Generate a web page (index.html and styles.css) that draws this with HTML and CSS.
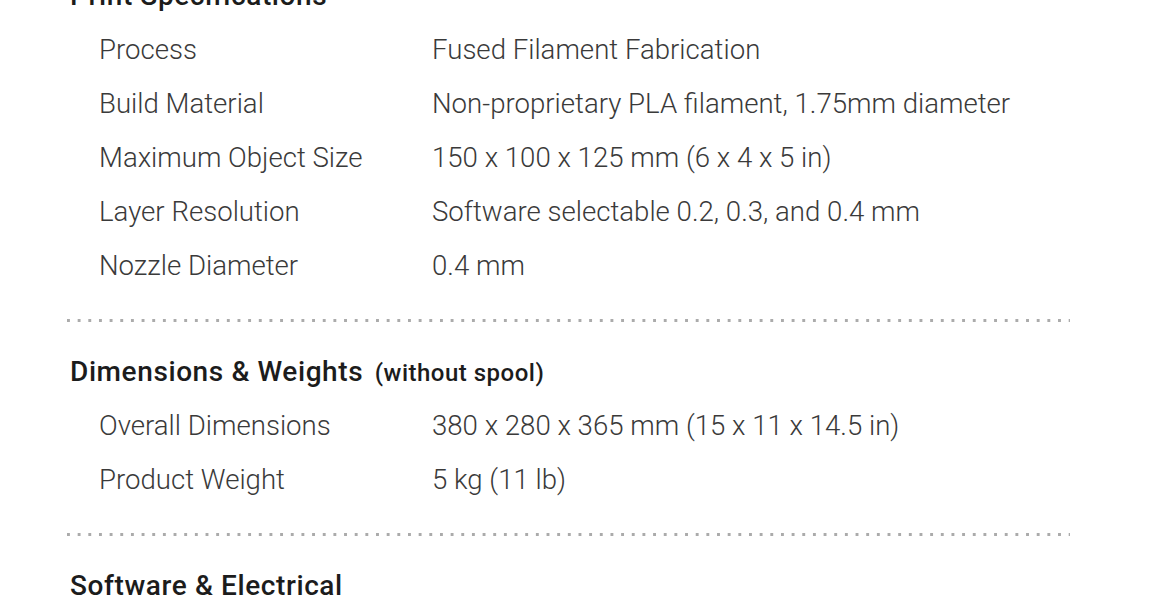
FILE: index.html
```html
<!DOCTYPE html>
<html lang="en">
<head>
<meta charset="utf-8">
<title>Specifications</title>
<link rel="stylesheet" href="styles.css">
</head>
<body>
<main class="specs">
  <section class="spec-section">
    <h2 class="spec-heading">Print Specifications</h2>
    <div class="spec-row"><span class="spec-label">Process</span><span class="spec-value">Fused Filament Fabrication</span></div>
    <div class="spec-row"><span class="spec-label">Build Material</span><span class="spec-value">Non-proprietary PLA filament, 1.75mm diameter</span></div>
    <div class="spec-row"><span class="spec-label">Maximum Object Size</span><span class="spec-value">150 x 100 x 125 mm (6 x 4 x 5 in)</span></div>
    <div class="spec-row"><span class="spec-label">Layer Resolution</span><span class="spec-value">Software selectable 0.2, 0.3, and 0.4 mm</span></div>
    <div class="spec-row"><span class="spec-label">Nozzle Diameter</span><span class="spec-value">0.4 mm</span></div>
  </section>
  <hr class="spec-sep">
  <section class="spec-section">
    <h2 class="spec-heading">Dimensions &amp; Weights <small class="spec-note">(without spool)</small></h2>
    <div class="spec-row"><span class="spec-label">Overall Dimensions</span><span class="spec-value">380 x 280 x 365 mm (15 x 11 x 14.5 in)</span></div>
    <div class="spec-row"><span class="spec-label">Product Weight</span><span class="spec-value">5 kg (11 lb)</span></div>
  </section>
  <hr class="spec-sep">
  <section class="spec-section">
    <h2 class="spec-heading">Software &amp; Electrical</h2>
  </section>
</main>
</body>
</html>
```

FILE: styles.css
```css
html, body {
  margin: 0;
  padding: 0;
  background: #ffffff;
}

body {
  font-family: Roboto, "Liberation Sans", Arial, sans-serif;
  overflow: hidden;
}

.specs {
  width: 1003px;
  margin: -31px 0 0 67px;
}

.spec-section {
  display: flex;
  flex-direction: column;
}

.spec-heading {
  margin: 0;
  padding-left: 3px;
  height: 54px;
  line-height: 54px;
  font-size: 28px;
  font-weight: 500;
  color: #1c1c1c;
  letter-spacing: 0.6px;
}

.spec-note {
  font-size: 24px;
  font-weight: 500;
  letter-spacing: 0.5px;
  margin-left: 4px;
}

.spec-row {
  display: grid;
  grid-template-columns: 333px 1fr;
  padding-left: 32px;
  height: 54px;
  line-height: 54px;
  font-size: 27.6px;
  font-weight: 300;
  color: #3a3a3a;
}

.spec-sep {
  border: 0;
  height: 3px;
  margin: 26px 0 23px;
  background-image: linear-gradient(to right, #ababab 0, #ababab 3px, transparent 3px);
  background-size: 10.67px 3px;
  background-repeat: repeat-x;
}
```
